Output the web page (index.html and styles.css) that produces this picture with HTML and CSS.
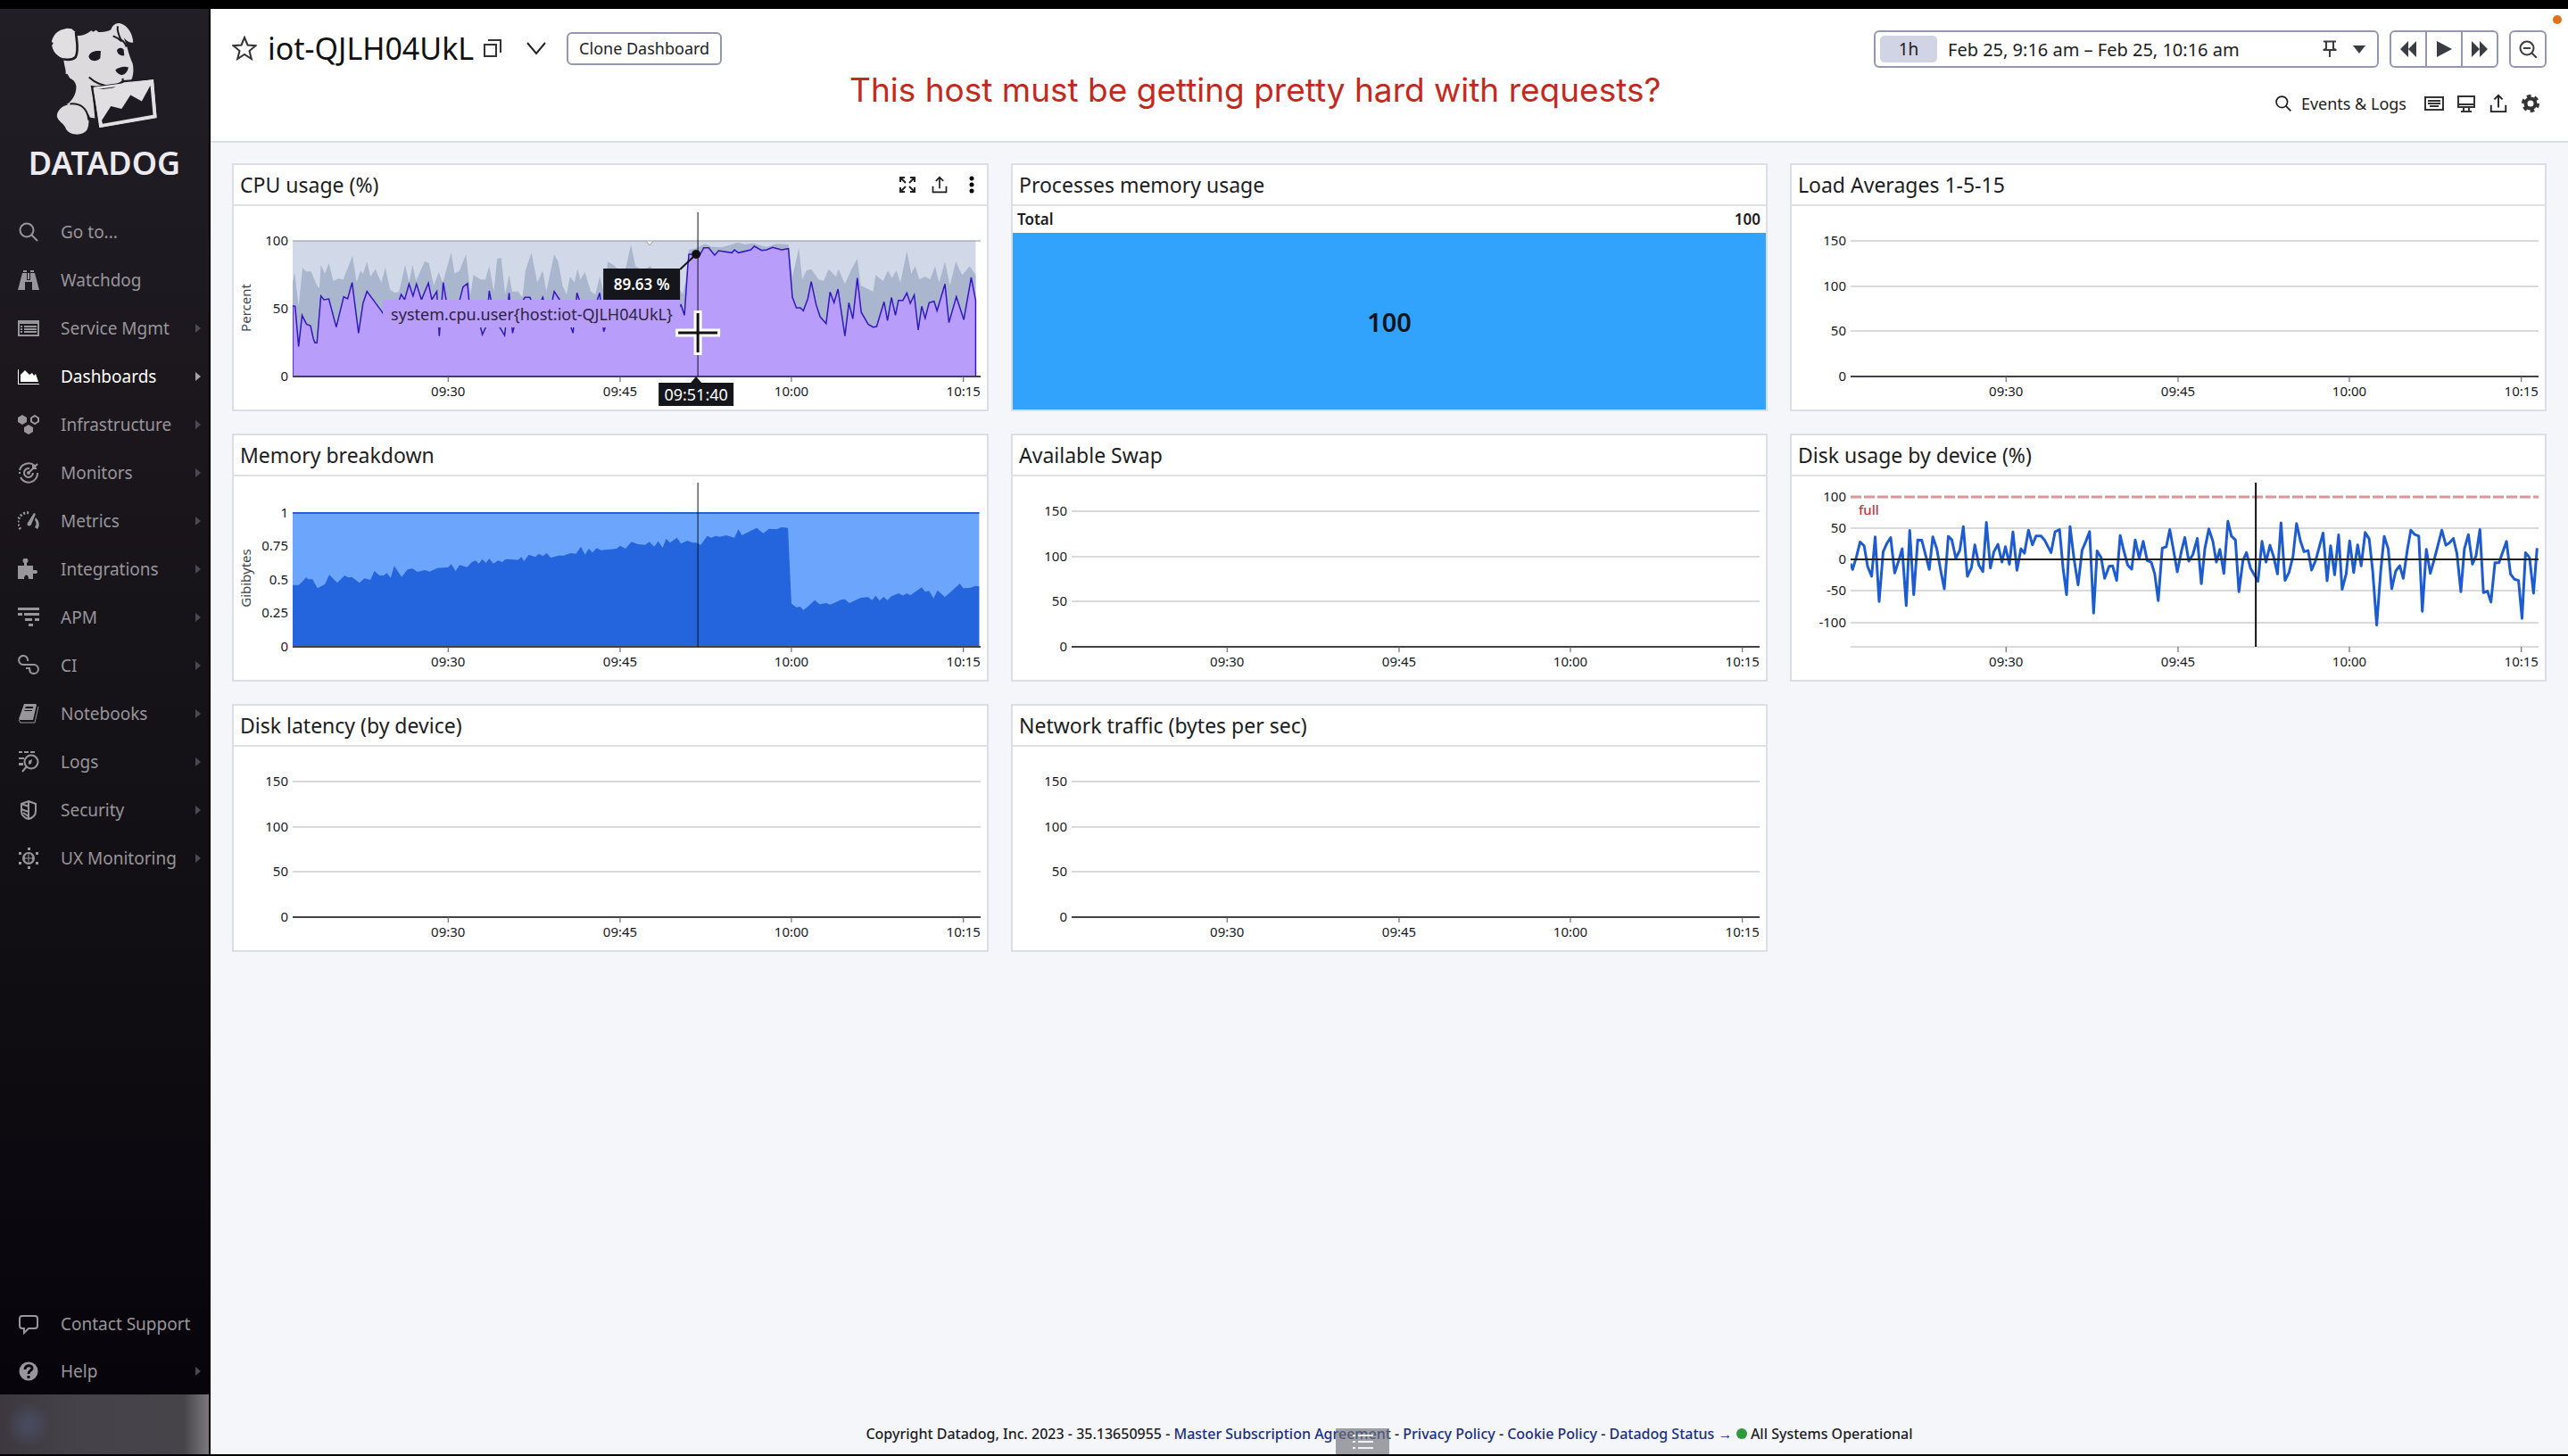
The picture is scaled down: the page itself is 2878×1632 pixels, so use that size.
FILE: index.html
```html
<!DOCTYPE html>
<html lang="en">
<head>
<meta charset="utf-8">
<title>iot-QJLH04UkL</title>
<link rel="stylesheet" href="styles.css">
</head>
<body>
<svg class="defs" aria-hidden="true">
  <symbol id="search" viewBox="0 0 24 24"><circle cx="10" cy="10" r="7.5" fill="none" stroke="currentColor" stroke-width="2"/><path d="M15.5 15.5 22 22" stroke="currentColor" stroke-width="2"/></symbol>
  <symbol id="share" viewBox="0 0 24 24"><path d="M3 14v8h18v-8M12 17V2M7 7l5-5 5 5" fill="none" stroke="currentColor" stroke-width="2"/></symbol>
  <symbol id="caret" viewBox="0 0 8 12"><path d="M1 1 7 6 1 11z" fill="currentColor"/></symbol>
</svg>
<div class="page">
  <aside class="sidebar">
    <a class="brand" href="#">
      <svg class="dog" viewBox="180 75 360 382" aria-hidden="true">
        <path fill="#dcdadd" d="M255 116C285 126 300 114 316 103L322 107 332 101 340 108C358 109 370 106 382 100C387 84 400 75 414 79C440 86 456 116 457 143C444 146 434 137 425 127C440 160 440 182 455 213C460 235 458 256 449 273L428 277 318 292 328 398 312 396C300 366 270 352 232 352C250 342 266 318 265 290C262 276 255 268 243 263L236 250 229 248C232 236 226 230 222 198z"/>
        <path fill="#e2dfe3" d="M183 153 188 145 182 141C186 118 205 101 220 99L234 95 249 97 264 109C262 130 272 165 260 192C245 202 218 200 203 187C192 178 185 166 183 153z"/>
        <path d="M264 107C264 130 276 165 263 192C252 202 236 202 222 199" fill="none" stroke="#1d1a21" stroke-width="8"/>
        <path d="M405 88C402 105 410 122 416 134C430 142 432 150 434 158M389 121C402 127 410 130 418 139" fill="none" stroke="#1d1a21" stroke-width="6"/>
        <path fill="#1d1a21" d="M307 191C308 176 330 168 348 172L346 196C335 208 311 209 307 191zM402 170C405 160 419 158 425 167L427 187C417 189 405 185 402 170zM397 235C410 225 430 222 441 227C439 240 430 252 418 253C408 250 400 245 397 235z"/>
        <path d="M308 260C325 276 355 292 392 290C412 287 424 278 422 264" fill="none" stroke="#1d1a21" stroke-width="6"/>
        <path fill="#dcdadd" d="M240 352C214 358 200 375 200 392C206 412 226 416 231 436C246 458 286 458 300 440C314 414 306 378 290 362C275 350 255 348 240 352z"/>
        <path d="M244 350C276 347 303 362 307 405" fill="none" stroke="#1d1a21" stroke-width="6"/>
        <path fill="#e2dfe3" stroke="#1d1a21" stroke-width="7" d="M318 292 355 297 388 293 425 274 528 265 540 400 342 434z"/>
        <path fill="none" stroke="#e2dfe3" stroke-width="8" d="M328 297 522 272 532 393 346 425z"/>
        <path fill="#1d1a21" d="M351 406 382 358 418 367 448 320 486 341 515 288 524 387 354 417z"/>
      </svg>
      <span class="brand-name">DATADOG</span>
    </a>
    <nav class="nav">
      <a class="item" href="#"><svg class="ico" viewBox="0 0 24 24"><use href="#search"/></svg><span>Go to...</span></a>
      <a class="item" href="#"><svg class="ico" viewBox="0 0 24 24"><path fill="currentColor" d="M6 1h4v2H6zM14 1h4v2h-4zM5 4h5v8h4V4h5l5 19h-8v-9H8v9H0zM11 4h2v7h-2z"/></svg><span>Watchdog</span></a>
      <a class="item" href="#"><svg class="ico" viewBox="0 0 24 24"><path fill="none" stroke="currentColor" stroke-width="2" d="M1 4h22v16H1zM1 6h22M7 10h14M7 13h14M7 16h14M3 10h2M3 13h2M3 16h2"/></svg><span>Service Mgmt</span><svg class="arrow"><use href="#caret"/></svg></a>
      <a class="item active" href="#"><svg class="ico" viewBox="0 0 24 24"><path fill="currentColor" d="M0 4h1v16h23v1H0zM3 18V10L8 5l5 5 3-2 2 3 2-2 3 9z"/></svg><span>Dashboards</span><svg class="arrow"><use href="#caret"/></svg></a>
      <a class="item" href="#"><svg class="ico" viewBox="0 0 24 24"><path fill="currentColor" d="M5 1l5 3v5l-5 3-5-3V4zM12 12l5 3v5l-5 3-5-3v-5z"/><path fill="none" stroke="currentColor" stroke-width="2" d="M19 2l4 2.500v4L19 11l-4-2.500v-4z"/></svg><span>Infrastructure</span><svg class="arrow"><use href="#caret"/></svg></a>
      <a class="item" href="#"><svg class="ico" viewBox="0 0 24 24"><path fill="none" stroke="currentColor" stroke-width="2" d="M2 9A10.500 10.500 0 0 1 19 4M22 12A10 10 0 0 1 3 17M17 12a5 5 0 1 1-4-5M12 12l10-10M17 3v4h4M1 12h2"/><circle cx="12" cy="12" r="2" fill="currentColor"/></svg><span>Monitors</span><svg class="arrow"><use href="#caret"/></svg></a>
      <a class="item" href="#"><svg class="ico" viewBox="0 0 24 24"><path fill="none" stroke="currentColor" stroke-width="3" stroke-dasharray="2 2" d="M3 21A11 11 0 0 1 14 3"/><path fill="currentColor" d="M18 3l2 1-5 12c-2 3-6 1-4-2zM20 8c4 4 5 9 2 13l-3-2c2-3 2-5 0-8z"/></svg><span>Metrics</span><svg class="arrow"><use href="#caret"/></svg></a>
      <a class="item" href="#"><svg class="ico" viewBox="0 0 24 24"><path fill="currentColor" d="M0 8h7V5a3 3 0 1 1 3 0v3h7v5h3a2 2 0 1 1 0 4h-3v6h-5c0-6-5-6-5 0H0z"/></svg><span>Integrations</span><svg class="arrow"><use href="#caret"/></svg></a>
      <a class="item" href="#"><svg class="ico" viewBox="0 0 24 24"><path fill="currentColor" d="M0 1h24v3H0zM0 7h5v3H0zM7 7h17v3H7zM8 13h8v3H8zM19 13h5v3h-5zM12 19h5v3h-5z"/></svg><span>APM</span><svg class="arrow"><use href="#caret"/></svg></a>
      <a class="item" href="#"><svg class="ico" viewBox="0 0 24 24"><path fill="none" stroke="currentColor" stroke-width="2" d="M11 7A5 5 0 1 0 6 11h12a5 5 0 1 1-5 6M9 15l4 0 1 5"/></svg><span>CI</span><svg class="arrow"><use href="#caret"/></svg></a>
      <a class="item" href="#"><svg class="ico" viewBox="0 0 24 24"><path fill="currentColor" fill-rule="evenodd" d="M7 1h13l1 1-4 17H2l-1-1zM9 4l-1 2h9V4zM8 8l-1 1h9V8z"/><path fill="none" stroke="currentColor" stroke-width="1" d="M23 4l-4 18H3l-2-3"/></svg><span>Notebooks</span><svg class="arrow"><use href="#caret"/></svg></a>
      <a class="item" href="#"><svg class="ico" viewBox="0 0 24 24"><path fill="currentColor" d="M1 0h4v2H1zM7 0h5v2H7zM14 0h5v2h-5zM1 7h6v2H1zM1 13h5v3H1zM12 11l4-2-1 5-3 1z"/><circle cx="15" cy="12" r="7.500" fill="none" stroke="currentColor" stroke-width="2"/><path d="M10 17l-5 6" stroke="currentColor" stroke-width="2"/></svg><span>Logs</span><svg class="arrow"><use href="#caret"/></svg></a>
      <a class="item" href="#"><svg class="ico" viewBox="0 0 24 24"><path fill="none" stroke="currentColor" stroke-width="2" d="M12 2l8 3v8c0 5-4 8-8 9-4-1-8-4-8-9V5zM12 2v20M12 8L4 5M12 14L4 11M12 19l-6-4"/></svg><span>Security</span><svg class="arrow"><use href="#caret"/></svg></a>
      <a class="item" href="#"><svg class="ico" viewBox="0 0 24 24"><circle cx="12" cy="12" r="6" fill="none" stroke="currentColor" stroke-width="2"/><path fill="none" stroke="currentColor" d="M12 6v12M6 12h12M9 7c-2 3-2 7 0 10M15 7c2 3 2 7 0 10"/><path fill="currentColor" d="M11 0h3v3h-3zM11 21h3v3h-3zM1 5h3v3H1zM20 5h3v3h-3zM1 16h3v3H1zM20 16h3v3h-3z"/></svg><span>UX Monitoring</span><svg class="arrow"><use href="#caret"/></svg></a>
    </nav>
    <nav class="nav nav-foot">
      <a class="item" href="#"><svg class="ico" viewBox="0 0 24 24"><path fill="none" stroke="currentColor" stroke-width="2" d="M5 3h14q3 0 3 3v8q0 3-3 3h-7l-5 5v-5H5q-3 0-3-3V6q0-3 3-3z"/></svg><span>Contact Support</span></a>
      <a class="item" href="#"><svg class="ico" viewBox="0 0 24 24"><circle cx="12" cy="12" r="10.500" fill="currentColor"/><path d="M8 10c0-6 9-5 8-1-1 3-4 2-4 6M12 17v3" fill="none" stroke="#0b070e" stroke-width="3"/></svg><span>Help</span><svg class="arrow"><use href="#caret"/></svg></a>
    </nav>
    <div class="account"></div>
  </aside>

  <main class="main">
    <header class="top">
      <div class="title-row">
        <svg class="star" viewBox="0 0 28 28"><path d="M14 2l3.500 8.500 9 .7-7 5.800 2.300 9L14 21l-7.800 5 2.300-9-7-5.800 9-.7z" fill="none" stroke="#333" stroke-width="2"/></svg>
        <h1>iot-QJLH04UkL</h1>
        <svg class="copy" viewBox="0 0 22 22"><path d="M2 7h13v13H2zM6 2h14v14" fill="none" stroke="#333" stroke-width="2"/></svg>
        <svg class="chev" viewBox="0 0 24 24"><path d="M2 6l10 12L22 6" fill="none" stroke="#222" stroke-width="2"/></svg>
        <button class="btn clone" type="button">Clone Dashboard</button>
      </div>
      <div class="tools">
        <div class="time-row">
          <button class="btn range" type="button">
            <span class="pill">1h</span><span class="dates">Feb 25, 9:16 am – Feb 25, 10:16 am</span>
            <svg class="pin" viewBox="0 0 18 20"><path d="M2 1.500h14M5 2v8M13 2v8M1.500 11h15M4 10l-2 1M14 10l2 1M9 11v8" fill="none" stroke="#3b3c42" stroke-width="2"/></svg>
            <svg class="down" viewBox="0 0 14 9"><path d="M0 0h14L7 9z" fill="#3b3c42"/></svg>
          </button>
          <div class="group">
            <button class="btn sq" type="button" aria-label="Back"><svg viewBox="0 0 20 20"><path d="M10 1v18L1 10zM19 1v18l-9-9z" fill="#3b3c42"/></svg></button>
            <button class="btn sq" type="button" aria-label="Play"><svg viewBox="0 0 20 20"><path d="M2 1v18l17-9z" fill="#3b3c42"/></svg></button>
            <button class="btn sq" type="button" aria-label="Forward"><svg viewBox="0 0 20 20"><path d="M1 1v18l9-9zM10 1v18l9-9z" fill="#3b3c42"/></svg></button>
          </div>
          <button class="btn sq" type="button" aria-label="Zoom out"><svg viewBox="0 0 20 20"><circle cx="9" cy="9" r="7.500" fill="none" stroke="#3b3c42" stroke-width="2"/><path d="M5 9h8M14 14l6 6" stroke="#3b3c42" stroke-width="2"/></svg></button>
        </div>
        <div class="action-row">
          <a class="events" href="#"><svg class="mini"><use href="#search"/></svg>Events &amp; Logs</a>
          <svg class="act" viewBox="0 0 22 22"><path d="M1 4h20v14H1zM4 8h14M4 11h14M6 14h10" fill="none" stroke="#333" stroke-width="2"/></svg>
          <svg class="act" viewBox="0 0 22 22"><path d="M2 3h18v12H2zM2 12h18M8 16v4M14 16v4M5 20h12" fill="none" stroke="#333" stroke-width="2"/></svg>
          <svg class="act"><use href="#share"/></svg>
          <svg class="act" viewBox="0 0 22 22"><circle cx="11" cy="11" r="5.500" fill="none" stroke="#333" stroke-width="4"/><circle cx="11" cy="11" r="8" fill="none" stroke="#333" stroke-width="4" stroke-dasharray="4.400 3.980"/></svg>
        </div>
      </div>
    </header>

    <section class="board">
      <article class="card">
        <h2><span>CPU usage (%)</span>
          <svg class="cico" viewBox="0 0 20 20"><path d="M2 7V2h5M13 2h5v5M2 13v5h5M13 18h5v-5M2 2l6 6M18 2l-6 6M2 18l6-6M18 18l-6-6" fill="none" stroke="#222" stroke-width="2"/></svg>
          <svg class="cico"><use href="#share"/></svg>
          <svg class="cico" viewBox="0 0 20 20"><circle cx="10" cy="3" r="2.500"/><circle cx="10" cy="10" r="2.500"/><circle cx="10" cy="17" r="2.500"/></svg>
        </h2>
        <svg class="chart">
          <text class="unit" transform="translate(19 114) rotate(-90)">Percent</text>
          <text class="y" x="61" y="44">100</text><text class="y" x="61" y="120">50</text><text class="y" x="61" y="196">0</text>
          <svg class="plot" x="66">
            <svg class="series" y="39" height="152" viewBox="143 300 1389 456" preserveAspectRatio="none">
              <path fill="#d1d9e8" d="M143 300H1522V756H143z"/>
              <path fill="#a9b6cd" d="M143 756V440L147 405 155 520 163 390 170 403 180 403 192 450 197 460 200 380 208 410 216 375 225 435 235 427 245 430 264 350 272 440 280 400 285 412 293 370 300 420 310 395 322 440 330 390 340 465 350 475 358 470 370 380 378 440 385 380 392 435 410 368 418 375 428 450 438 405 446 440 463 340 470 410 480 400 493 345 502 480 508 415 523 430 532 430 540 385 549 470 556 360 564 358 572 480 580 415 586 470 598 470 607 490 613 400 625 340 637 440 648 400 655 470 671 345 679 370 688 450 696 480 703 420 712 440 718 395 724 430 733 405 745 470 754 480 763 420 772 480 779 370 790 380 800 395 815 395 826 313 835 385 850 400 865 385 880 420 900 395 920 450 930 480 936 440 943 330 957 325 975 310 990 320 1010 322 1043 305 1055 312 1073 308 1100 320 1120 310 1144 312 1152 420 1165 325 1172 430 1180 400 1190 395 1205 430 1215 435 1225 395 1240 420 1245 395 1258 445 1270 400 1283 360 1290 450 1315 470 1320 415 1335 435 1345 400 1353 425 1362 400 1370 440 1383 335 1392 410 1400 385 1408 430 1420 420 1430 430 1440 385 1448 440 1460 370 1470 450 1482 370 1490 400 1495 415 1510 385 1522 415V756z"/>
              <path fill="#b99dfb" stroke="#3018c4" stroke-width="1.500" vector-effect="non-scaling-stroke" d="M143 756V518L148 520 155 655 162 550 171 580 179 585 185 630 188 643 192 643 200 485 206 498 216 495 231 590 246 488 254 495 263 440 276 610 285 510 293 470 322 535 340 580 358 500 362 480 369 498 378 445 386 485 393 445 403 498 417 442 424 498 434 470 439 620 447 440 453 500 465 540 480 500 487 455 496 443 502 560 515 540 526 615 533 590 540 468 550 560 571 618 580 475 587 610 600 520 612 490 622 490 635 540 648 490 660 560 671 470 682 498 695 540 709 610 717 475 730 540 745 560 763 475 771 605 785 540 800 520 820 570 850 500 880 560 905 520 920 530 927 515 934 550 941 380 943 345 957 345 965 348 973 323 983 323 995 348 1003 333 1030 340 1035 330 1043 340 1068 330 1075 318 1090 332 1100 330 1112 322 1130 330 1144 326 1152 490 1160 525 1168 525 1174 535 1183 495 1190 437 1200 515 1208 555 1220 578 1228 472 1236 508 1244 462 1258 620 1266 508 1274 562 1283 425 1291 540 1305 580 1315 590 1322 588 1337 505 1344 568 1352 490 1360 550 1366 500 1375 500 1383 475 1390 510 1398 482 1406 600 1413 520 1420 560 1428 508 1438 503 1444 535 1460 445 1468 575 1483 488 1498 565 1513 423 1522 500V756"/>
            </svg>
            <path class="tri" d="M396 39l4 5 4-5" fill="#fff" stroke="#999"/>
            <line class="grey" x2="100%" y1="39" y2="39"/><line class="axis" x2="100%" y1="191" y2="191"/>
            <line class="tick" x1="22.600%" x2="22.600%" y1="191" y2="197"/><line class="tick" x1="47.600%" x2="47.600%" y1="191" y2="197"/><line class="tick" x1="72.500%" x2="72.500%" y1="191" y2="197"/><line class="tick" x1="97.500%" x2="97.500%" y1="191" y2="197"/>
            <text class="x" x="22.600%" y="213">09:30</text><text class="x" x="47.600%" y="213">09:45</text><text class="x" x="72.500%" y="213">10:00</text><text class="x" x="97.500%" y="213">10:15</text>
            <svg class="hover" x="58.900%">
              <path d="M-20 71L-2 54" stroke="#111" stroke-width="2"/>
              <line class="cursor thin" y1="7" y2="191"/>
              <circle cx="-2" cy="54" r="5" fill="#111"/>
              <rect x="-353" y="105" width="333" height="31" fill="#b99dfb"/>
              <text class="legend" x="-344" y="128">system.cpu.user{host:iot-QJLH04UkL}</text>
              <rect x="-106" y="70" width="86" height="35" fill="#14161b"/>
              <text class="value" x="-63" y="94">89.63 %</text>
              <path d="M-8 198L-2 191 4 198H40V224H-44V198z" fill="#14161b"/>
              <text class="stamp" x="-2" y="218">09:51:40</text>
              <path d="M-25 142H25M0 117V167" stroke="#fff" stroke-width="9"/><path d="M-22 142H22M0 120V164" stroke="#111" stroke-width="3"/>
            </svg>
          </svg>
        </svg>
      </article>

      <article class="card">
        <h2><span>Processes memory usage</span></h2>
        <div class="total"><span>Total</span><span>100</span></div>
        <div class="tree">100</div>
      </article>

      <article class="card">
        <h2><span>Load Averages 1-5-15</span></h2>
        <svg class="chart">
          <text class="y" x="61" y="44">150</text><text class="y" x="61" y="95">100</text><text class="y" x="61" y="145">50</text><text class="y" x="61" y="196">0</text>
          <svg class="plot" x="66">
            <line class="grid" x2="100%" y1="39" y2="39"/><line class="grid" x2="100%" y1="90" y2="90"/><line class="grid" x2="100%" y1="140" y2="140"/><line class="axis" x2="100%" y1="191" y2="191"/>
            <line class="tick" x1="22.600%" x2="22.600%" y1="191" y2="197"/><line class="tick" x1="47.600%" x2="47.600%" y1="191" y2="197"/><line class="tick" x1="72.500%" x2="72.500%" y1="191" y2="197"/><line class="tick" x1="97.500%" x2="97.500%" y1="191" y2="197"/>
            <text class="x" x="22.600%" y="213">09:30</text><text class="x" x="47.600%" y="213">09:45</text><text class="x" x="72.500%" y="213">10:00</text><text class="x" x="97.500%" y="213">10:15</text>
          </svg>
        </svg>
      </article>

      <article class="card">
        <h2><span>Memory breakdown</span></h2>
        <svg class="chart">
          <text class="unit" transform="translate(19 114) rotate(-90)">Gibibytes</text>
          <text class="y" x="61" y="46">1</text><text class="y" x="61" y="83">0.75</text><text class="y" x="61" y="121">0.5</text><text class="y" x="61" y="158">0.25</text><text class="y" x="61" y="196">0</text>
          <svg class="plot" x="66">
            <svg class="series" y="41" height="150" viewBox="143 285 1389 450" preserveAspectRatio="none">
              <path fill="#6ca5fc" d="M143 285H1529V735H143z"/>
              <path fill="#2464dc" d="M143 735V527L155 527 163 515 170 502 175 508 183 508 193 538 208 525 217 493 233 520 248 495 255 502 262 500 278 520 288 505 300 510 308 480 318 495 327 495 333 487 341 503 348 463 363 500 375 475 385 472 395 483 410 477 420 482 435 470 457 468 463 457 472 480 480 460 495 467 505 450 512 445 519 455 526 440 533 453 540 438 548 455 558 445 566 450 573 440 590 442 598 443 605 433 610 447 620 425 627 430 633 433 640 422 648 430 656 420 664 436 680 428 690 428 705 420 715 422 725 398 733 425 741 405 748 418 757 403 765 410 785 407 797 405 804 395 815 405 827 382 840 390 855 392 863 382 873 398 881 380 890 402 897 372 905 385 919 368 927 388 940 378 950 385 958 385 967 392 980 362 988 368 997 362 1005 365 1018 360 1035 368 1043 340 1050 360 1065 347 1080 335 1093 353 1105 338 1120 340 1130 333 1143 335 1150 590 1160 602 1168 600 1174 612 1185 597 1197 578 1207 592 1220 588 1228 593 1237 587 1250 577 1258 575 1267 588 1290 570 1305 568 1313 578 1320 563 1328 580 1336 567 1344 578 1352 565 1367 555 1375 563 1383 555 1390 562 1413 535 1420 550 1428 547 1437 572 1445 545 1460 568 1490 523 1497 538 1510 537 1522 530 1529 532V735z"/>
            </svg>
            <line class="blue" x2="99.800%" y1="41" y2="41"/><line class="axis" x2="100%" y1="191" y2="191"/>
            <line class="tick" x1="22.600%" x2="22.600%" y1="191" y2="197"/><line class="tick" x1="47.600%" x2="47.600%" y1="191" y2="197"/><line class="tick" x1="72.500%" x2="72.500%" y1="191" y2="197"/><line class="tick" x1="97.500%" x2="97.500%" y1="191" y2="197"/>
            <text class="x" x="22.600%" y="213">09:30</text><text class="x" x="47.600%" y="213">09:45</text><text class="x" x="72.500%" y="213">10:00</text><text class="x" x="97.500%" y="213">10:15</text>
            <line class="cursor thin" x1="58.900%" x2="58.900%" y1="7" y2="191"/>
          </svg>
        </svg>
      </article>

      <article class="card">
        <h2><span>Available Swap</span></h2>
        <svg class="chart">
          <text class="y" x="61" y="44">150</text><text class="y" x="61" y="95">100</text><text class="y" x="61" y="145">50</text><text class="y" x="61" y="196">0</text>
          <svg class="plot" x="66">
            <line class="grid" x2="100%" y1="39" y2="39"/><line class="grid" x2="100%" y1="90" y2="90"/><line class="grid" x2="100%" y1="140" y2="140"/><line class="axis" x2="100%" y1="191" y2="191"/>
            <line class="tick" x1="22.600%" x2="22.600%" y1="191" y2="197"/><line class="tick" x1="47.600%" x2="47.600%" y1="191" y2="197"/><line class="tick" x1="72.500%" x2="72.500%" y1="191" y2="197"/><line class="tick" x1="97.500%" x2="97.500%" y1="191" y2="197"/>
            <text class="x" x="22.600%" y="213">09:30</text><text class="x" x="47.600%" y="213">09:45</text><text class="x" x="72.500%" y="213">10:00</text><text class="x" x="97.500%" y="213">10:15</text>
          </svg>
        </svg>
      </article>

      <article class="card">
        <h2><span>Disk usage by device (%)</span></h2>
        <svg class="chart">
          <text class="y" x="61" y="28">100</text><text class="y" x="61" y="63">50</text><text class="y" x="61" y="98">0</text><text class="y" x="61" y="133">-50</text><text class="y" x="61" y="169">-100</text>
          <svg class="plot" x="66">
            <line class="grid" x2="100%" y1="58" y2="58"/><line class="grid" x2="100%" y1="128" y2="128"/><line class="grid" x2="100%" y1="164" y2="164"/><line class="grid" x2="100%" y1="191" y2="191"/>
            <line class="full" x2="100%" y1="23" y2="23"/><text class="full-label" x="9" y="43">full</text>
            <svg class="series" y="23" height="168" viewBox="150 230 1373 506" preserveAspectRatio="none">
              <path fill="none" stroke="#1d5bd0" stroke-width="3" stroke-linejoin="round" vector-effect="non-scaling-stroke" d="M150 455L154 475 162 430 169 382 177 395 184 465 192 498 199 365 207 583 215 415 223 385 230 367 238 487 246 445 253 405 261 597 268 343 276 560 284 375 292 376 307 475 314 365 322 405 330 480 337 540 345 363 352 375 360 437 368 410 375 330 383 498 391 470 398 392 406 460 414 482 421 316 429 470 436 415 444 390 452 450 459 398 467 457 474 348 482 478 490 405 497 420 505 342 513 392 520 362 530 362 537 375 550 418 558 348 567 340 574 470 581 560 588 330 596 440 604 527 612 410 620 378 627 347 635 622 642 412 650 435 657 505 666 464 673 463 681 512 688 360 695 410 703 460 711 474 718 375 726 437 734 380 742 445 750 450 757 490 764 580 772 403 780 398 787 340 795 415 802 483 810 415 817 367 825 447 833 425 842 370 850 523 857 405 865 338 873 380 880 450 887 407 895 488 903 312 910 362 918 375 925 550 933 445 940 418 948 470 963 515 971 380 979 450 987 393 994 430 1002 490 1009 317 1017 512 1025 485 1033 430 1040 320 1048 380 1055 415 1063 411 1070 477 1078 445 1093 352 1101 513 1108 395 1116 493 1124 358 1131 542 1139 490 1146 378 1154 485 1162 392 1169 463 1177 350 1185 372 1192 480 1200 663 1208 480 1215 363 1223 405 1230 540 1238 480 1246 462 1253 505 1261 410 1268 342 1276 357 1284 362 1291 616 1299 407 1307 488 1315 440 1330 342 1338 393 1345 385 1353 370 1360 420 1368 550 1375 405 1383 357 1391 457 1398 430 1406 340 1413 553 1421 548 1428 585 1436 452 1444 452 1459 380 1467 490 1475 508 1483 512 1490 640 1497 418 1505 435 1513 555 1520 403"/>
            </svg>
            <line class="zero" x2="100%" y1="93" y2="93"/>
            <line class="tick" x1="22.600%" x2="22.600%" y1="191" y2="197"/><line class="tick" x1="47.600%" x2="47.600%" y1="191" y2="197"/><line class="tick" x1="72.500%" x2="72.500%" y1="191" y2="197"/><line class="tick" x1="97.500%" x2="97.500%" y1="191" y2="197"/>
            <text class="x" x="22.600%" y="213">09:30</text><text class="x" x="47.600%" y="213">09:45</text><text class="x" x="72.500%" y="213">10:00</text><text class="x" x="97.500%" y="213">10:15</text>
            <line class="cursor" x1="58.900%" x2="58.900%" y1="7" y2="191"/>
          </svg>
        </svg>
      </article>

      <article class="card">
        <h2><span>Disk latency (by device)</span></h2>
        <svg class="chart">
          <text class="y" x="61" y="44">150</text><text class="y" x="61" y="95">100</text><text class="y" x="61" y="145">50</text><text class="y" x="61" y="196">0</text>
          <svg class="plot" x="66">
            <line class="grid" x2="100%" y1="39" y2="39"/><line class="grid" x2="100%" y1="90" y2="90"/><line class="grid" x2="100%" y1="140" y2="140"/><line class="axis" x2="100%" y1="191" y2="191"/>
            <line class="tick" x1="22.600%" x2="22.600%" y1="191" y2="197"/><line class="tick" x1="47.600%" x2="47.600%" y1="191" y2="197"/><line class="tick" x1="72.500%" x2="72.500%" y1="191" y2="197"/><line class="tick" x1="97.500%" x2="97.500%" y1="191" y2="197"/>
            <text class="x" x="22.600%" y="213">09:30</text><text class="x" x="47.600%" y="213">09:45</text><text class="x" x="72.500%" y="213">10:00</text><text class="x" x="97.500%" y="213">10:15</text>
          </svg>
        </svg>
      </article>

      <article class="card">
        <h2><span>Network traffic (bytes per sec)</span></h2>
        <svg class="chart">
          <text class="y" x="61" y="44">150</text><text class="y" x="61" y="95">100</text><text class="y" x="61" y="145">50</text><text class="y" x="61" y="196">0</text>
          <svg class="plot" x="66">
            <line class="grid" x2="100%" y1="39" y2="39"/><line class="grid" x2="100%" y1="90" y2="90"/><line class="grid" x2="100%" y1="140" y2="140"/><line class="axis" x2="100%" y1="191" y2="191"/>
            <line class="tick" x1="22.600%" x2="22.600%" y1="191" y2="197"/><line class="tick" x1="47.600%" x2="47.600%" y1="191" y2="197"/><line class="tick" x1="72.500%" x2="72.500%" y1="191" y2="197"/><line class="tick" x1="97.500%" x2="97.500%" y1="191" y2="197"/>
            <text class="x" x="22.600%" y="213">09:30</text><text class="x" x="47.600%" y="213">09:45</text><text class="x" x="72.500%" y="213">10:00</text><text class="x" x="97.500%" y="213">10:15</text>
          </svg>
        </svg>
      </article>
    </section>

    <footer class="foot">Copyright Datadog, Inc. 2023 - 35.13650955 - <a href="#">Master Subscription Agreement</a> - <a href="#">Privacy Policy</a> - <a href="#">Cookie Policy</a> - <a href="#">Datadog Status →</a> <i class="ok"></i> All Systems Operational</footer>
  </main>

  <p class="caption">This host must be getting pretty hard with requests?</p>
  <i class="rec"></i>
  <div class="handle"><svg viewBox="0 0 24 20"><path d="M7 3h17M7 10h17M7 17h17M1 3h3M1 10h3M1 17h3" stroke="#f2f2f2" stroke-width="2"/></svg></div>
</div>
</body>
</html>
```

FILE: styles.css
```css
* { box-sizing: border-box; }
body { margin: 0; font-family: "Noto Sans", "Open Sans", sans-serif; color: #1c1d22; background: #000; }
a { color: inherit; text-decoration: none; }
.defs { position: absolute; width: 0; height: 0; }
.page { position: relative; display: grid; grid-template-columns: 236px 1fr; min-height: 100vh; border-top: 10px solid #000; border-bottom: 2px solid #000; }

/* Sidebar */
.sidebar { display: flex; flex-direction: column; background: linear-gradient(#211e26, #1b171d 25%, #141116 55%, #07040b 95%); border-right: 2px solid #050307; color: #98959b; }
.brand { display: flex; flex-direction: column; align-items: center; gap: 11px; padding-top: 15px; }
.dog { width: 120px; height: 127px; }
.brand-name { font-size: 36px; line-height: 40px; font-weight: 600; color: #eceaee; }
.nav { display: flex; flex-direction: column; padding-top: 30px; }
.item { display: grid; grid-template-columns: 24px 1fr 8px; column-gap: 24px; align-items: center; height: 54px; padding: 0 8px 0 20px; font-size: 19px; white-space: nowrap; }
.ico { width: 24px; height: 24px; }
.item span { min-width: 0; margin-right: -24px; }
.arrow { width: 8px; height: 12px; color: #4c4950; }
.active { color: #fff; }
.active .arrow { color: #a5a3a8; }
.nav-foot { margin-top: auto; padding: 0; }
.nav-foot .item:last-child { height: 52px; }
.account { height: 67px; background: radial-gradient(circle at 32px 34px, #484a60 4px, transparent 26px), linear-gradient(90deg, #3d383f, #454349 40%, #464349 88%, #77747a 99%); }

/* Header */
.top { display: flex; justify-content: space-between; height: 150px; padding: 24px 24px 0 24px; background: #fff; border-bottom: 2px solid #dae0e9; }
.title-row { display: flex; align-items: center; height: 40px; }
.star { width: 28px; height: 28px; }
h1 { margin: 0 10px 0 12px; font-size: 34px; line-height: 40px; font-weight: 400; color: #111; }
.copy { width: 22px; height: 22px; }
.chev { width: 24px; height: 24px; margin: 0 22px 0 26px; }
.btn { font: inherit; color: inherit; background: #fff; border: 2px solid #9596b4; border-radius: 6px; padding: 0; }
.clone { width: 174px; height: 37px; font-size: 18px; line-height: 20px; white-space: nowrap; }
.tools { display: flex; flex-direction: column; align-items: flex-end; gap: 28px; }
.time-row { display: flex; gap: 12px; }
.range { display: flex; align-items: center; width: 566px; height: 42px; padding: 0 9px 0 5px; font-size: 19px; }
.pill { width: 64px; margin-right: 12px; line-height: 30px; border-radius: 5px; background: #d0d4e4; }
.dates { margin-right: auto; font-size: 20px; }
.pin { width: 18px; height: 20px; margin-right: 17px; }
.down { width: 14px; height: 9px; margin-right: 4px; }
.group { display: flex; }
.group .btn + .btn { margin-left: -2px; }
.group .btn:first-child { border-radius: 6px 0 0 6px; }
.group .btn:nth-child(2) { border-radius: 0; }
.group .btn:last-child { border-radius: 0 6px 6px 0; }
.sq { display: grid; place-items: center; width: 42px; height: 42px; }
.sq svg { width: 20px; height: 20px; }
.action-row { display: flex; align-items: center; gap: 14px; margin-right: 7px; font-size: 18px; line-height: 24px; }
.events { display: flex; align-items: center; gap: 10px; margin-right: 6px; }
.mini { width: 20px; height: 20px; }
.act { width: 22px; height: 22px; }

/* Dashboard cards */
.board { display: grid; grid-template-columns: repeat(3, minmax(0, 1fr)); gap: 25px; padding: 23px 24px 0; }
.main { display: flex; flex-direction: column; min-width: 0; background: #f5f6fa; }
.card { display: flex; flex-direction: column; height: 278px; background: #fff; border: 2px solid #dcdde8; }
h2 { display: flex; align-items: center; gap: 16px; height: 46px; margin: 0; padding: 0 7px 0 7px; border-bottom: 2px solid #dfdfe7; font-size: 23px; line-height: 30px; font-weight: 400; }
h2 span { margin-right: auto; }
.cico { width: 20px; height: 20px; }
.chart { display: block; width: 100%; height: 228px; }
.plot { width: calc(100% - 73px); height: 228px; overflow: visible; }
.series { width: 100%; }
.hover { overflow: visible; }
.y, .x, .unit { font-size: 15px; fill: #17181c; }
.y { text-anchor: end; }
.x, .unit, .value, .stamp { text-anchor: middle; }
.unit { fill: #44464e; }
.grid { stroke: #d9dadd; stroke-width: 2px; }
.grey { stroke: #8b90a0; stroke-width: 1px; }
.blue { stroke: #2a5fd0; stroke-width: 2px; }
.axis { stroke: #42414d; stroke-width: 2px; }
.zero { stroke: #222; stroke-width: 2px; }
.tick { stroke: #555; stroke-width: 1px; }
.cursor { stroke: #111; stroke-width: 2px; }
.thin { stroke-width: 1px; }
.full { stroke: #dc9696; stroke-width: 3px; stroke-dasharray: 12px 3px; }
.full-label { font-size: 15px; font-weight: 500; fill: #c2333f; }
.legend { font-size: 18px; fill: #2c2440; }
.value { font-size: 17px; font-weight: 600; fill: #fff; }
.stamp { font-size: 18px; fill: #fff; }
.total { display: flex; justify-content: space-between; height: 30px; padding: 0 6px 0 5px; font-size: 17px; line-height: 30px; font-weight: 600; }
.tree { display: grid; place-items: center; flex: 1; background: #32a3fd; font-size: 29px; font-weight: 600; color: #10151c; }

/* Footer */
.foot { margin-top: auto; padding-bottom: 11px; text-align: center; font-size: 16px; line-height: 24px; font-weight: 500; }
.foot a { color: #1a2f83; }
.ok { display: inline-block; width: 12px; height: 12px; border-radius: 50%; background: #2f9a3c; }

/* Overlays */
.caption { position: absolute; top: 67px; left: 952px; margin: 0; font-family: Inter, sans-serif; font-size: 37px; line-height: 48px; color: #c22a1e; white-space: nowrap; }
.rec { position: absolute; top: 7px; right: 7px; width: 10px; height: 10px; border-radius: 50%; background: #e0701a; }
.handle { position: absolute; bottom: 0; left: 1497px; display: grid; place-items: center; width: 60px; height: 29px; background: rgba(110, 112, 118, .65); }
.handle svg { width: 24px; height: 20px; }
```
